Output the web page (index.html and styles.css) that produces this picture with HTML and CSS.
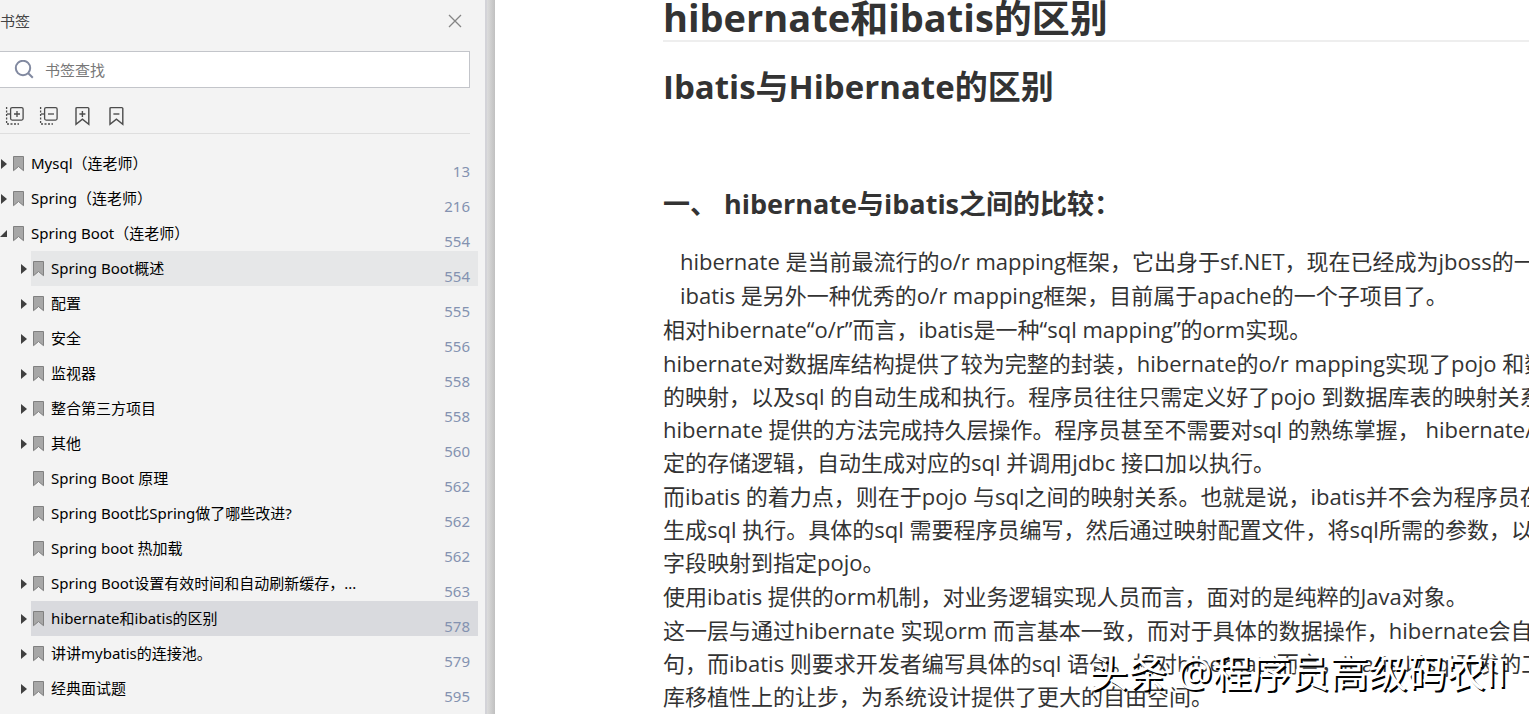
FILE: index.html
```html
<!DOCTYPE html>
<html lang="zh-CN">
<head>
<meta charset="utf-8">
<title>hibernate和ibatis的区别</title>
<link rel="stylesheet" href="styles.css">
</head>
<body>
<svg class="defs" aria-hidden="true">
  <symbol id="mark" viewBox="0 0 11 16"><path d="M.5.5h10v14.200L5.500 10.500.5 14.700z" fill="#a7a7a7" stroke="#808080"/></symbol>
  <symbol id="closed" viewBox="0 0 6 10"><path d="M0 0 6 5 0 10z" fill="#404040"/></symbol>
  <symbol id="open" viewBox="0 0 8 8"><path d="M7 0V7H0z" fill="#404040"/></symbol>
</svg>
<div class="app">
  <aside class="sidebar">
    <header class="head">
      <h2 class="title">书签</h2>
      <button class="icon-button" type="button" aria-label="关闭"><svg width="14" height="14" viewBox="0 0 14 14" fill="none" stroke="#858585" stroke-width="1.300"><path d="M1 1 13 13M13 1 1 13"/></svg></button>
    </header>
    <label class="search">
      <svg width="20" height="20" viewBox="0 0 20 20" fill="none" stroke="#8189a0" stroke-width="2"><circle cx="9" cy="8" r="7.200"/><path d="m14 13 4.800 4.800"/></svg>
      <input class="search-input" type="text" placeholder="书签查找" aria-label="书签查找">
    </label>
    <div class="tools">
      <button class="icon-button" type="button" aria-label="全部展开"><svg width="20" height="20" viewBox="0 0 20 20" fill="none" stroke="#4c4c4c" stroke-width="1.300"><rect x="5.600" y="1.600" width="12.500" height="12.500" rx="1.500"/><path d="M12 5v6M9 8h6"/><path d="M1.600 1v17M2 18h12" stroke-dasharray="2 1.500"/><path d="M2 8h3"/></svg></button>
      <button class="icon-button" type="button" aria-label="全部折叠"><svg width="20" height="20" viewBox="0 0 20 20" fill="none" stroke="#4c4c4c" stroke-width="1.300"><rect x="5.600" y="1.600" width="12.500" height="12.500" rx="1.500"/><path d="M9 8h6"/><path d="M1.600 1v17M2 18h12" stroke-dasharray="2 1.500"/><path d="M2 8h3"/></svg></button>
      <button class="icon-button" type="button" aria-label="添加书签"><svg width="20" height="20" viewBox="0 0 20 20" fill="none" stroke="#4c4c4c" stroke-width="1.400"><path d="M3 2.600q0-1 1-1h10.800q1 0 1 1v15.600L9.400 13.200 3 18.200z"/><path d="M9.400 5v6M6.400 8h6"/></svg></button>
      <button class="icon-button" type="button" aria-label="删除书签"><svg width="20" height="20" viewBox="0 0 20 20" fill="none" stroke="#4c4c4c" stroke-width="1.400"><path d="M3 2.600q0-1 1-1h10.800q1 0 1 1v15.600L9.400 13.200 3 18.200z"/><path d="M6.400 8h6"/></svg></button>
    </div>
    <ul class="tree">
      <li class="row"><svg class="arrow"><use href="#closed"/></svg><a class="item" href="#"><svg class="mark"><use href="#mark"/></svg><span class="name">Mysql（连老师）</span><span class="page">13</span></a></li>
      <li class="row"><svg class="arrow"><use href="#closed"/></svg><a class="item" href="#"><svg class="mark"><use href="#mark"/></svg><span class="name">Spring（连老师）</span><span class="page">216</span></a></li>
      <li class="row"><svg class="arrow"><use href="#open"/></svg><a class="item" href="#"><svg class="mark"><use href="#mark"/></svg><span class="name">Spring Boot（连老师）</span><span class="page">554</span></a></li>
      <li class="row child"><svg class="arrow"><use href="#closed"/></svg><a class="item hover" href="#"><svg class="mark"><use href="#mark"/></svg><span class="name">Spring Boot概述</span><span class="page">554</span></a></li>
      <li class="row child"><svg class="arrow"><use href="#closed"/></svg><a class="item" href="#"><svg class="mark"><use href="#mark"/></svg><span class="name">配置</span><span class="page">555</span></a></li>
      <li class="row child"><svg class="arrow"><use href="#closed"/></svg><a class="item" href="#"><svg class="mark"><use href="#mark"/></svg><span class="name">安全</span><span class="page">556</span></a></li>
      <li class="row child"><svg class="arrow"><use href="#closed"/></svg><a class="item" href="#"><svg class="mark"><use href="#mark"/></svg><span class="name">监视器</span><span class="page">558</span></a></li>
      <li class="row child"><svg class="arrow"><use href="#closed"/></svg><a class="item" href="#"><svg class="mark"><use href="#mark"/></svg><span class="name">整合第三方项目</span><span class="page">558</span></a></li>
      <li class="row child"><svg class="arrow"><use href="#closed"/></svg><a class="item" href="#"><svg class="mark"><use href="#mark"/></svg><span class="name">其他</span><span class="page">560</span></a></li>
      <li class="row child"><svg class="arrow"></svg><a class="item" href="#"><svg class="mark"><use href="#mark"/></svg><span class="name">Spring Boot 原理</span><span class="page">562</span></a></li>
      <li class="row child"><svg class="arrow"></svg><a class="item" href="#"><svg class="mark"><use href="#mark"/></svg><span class="name">Spring Boot比Spring做了哪些改进?</span><span class="page">562</span></a></li>
      <li class="row child"><svg class="arrow"></svg><a class="item" href="#"><svg class="mark"><use href="#mark"/></svg><span class="name">Spring boot 热加载</span><span class="page">562</span></a></li>
      <li class="row child"><svg class="arrow"><use href="#closed"/></svg><a class="item" href="#"><svg class="mark"><use href="#mark"/></svg><span class="name">Spring Boot设置有效时间和自动刷新缓存，...</span><span class="page">563</span></a></li>
      <li class="row child"><svg class="arrow"><use href="#closed"/></svg><a class="item current" href="#"><svg class="mark"><use href="#mark"/></svg><span class="name">hibernate和ibatis的区别</span><span class="page">578</span></a></li>
      <li class="row child"><svg class="arrow"><use href="#closed"/></svg><a class="item" href="#"><svg class="mark"><use href="#mark"/></svg><span class="name">讲讲mybatis的连接池。</span><span class="page">579</span></a></li>
      <li class="row child"><svg class="arrow"><use href="#closed"/></svg><a class="item" href="#"><svg class="mark"><use href="#mark"/></svg><span class="name">经典面试题</span><span class="page">595</span></a></li>
    </ul>
  </aside>
  <div class="divider"></div>
  <main class="doc">
    <h1 class="h1">hibernate和ibatis的区别</h1>
    <h2 class="h2">Ibatis与Hibernate的区别</h2>
    <h3 class="h3">一、 hibernate与ibatis之间的比较：</h3>
    <div class="text">
      <p class="para indent">hibernate 是当前最流行的o/r mapping框架，它出身于sf.NET，现在已经成为jboss的一个</p>
      <p class="para indent">ibatis 是另外一种优秀的o/r mapping框架，目前属于apache的一个子项目了。</p>
      <p class="para">相对hibernate“o/r”而言，ibatis是一种“sql mapping”的orm实现。</p>
      <p class="para">hibernate对数据库结构提供了较为完整的封装，hibernate的o/r mapping实现了pojo 和数据<br>的映射，以及sql 的自动生成和执行。程序员往往只需定义好了pojo 到数据库表的映射关系，<br>hibernate 提供的方法完成持久层操作。程序员甚至不需要对sql 的熟练掌握， hibernate/o<br>定的存储逻辑，自动生成对应的sql 并调用jdbc 接口加以执行。</p>
      <p class="para">而ibatis 的着力点，则在于pojo 与sql之间的映射关系。也就是说，ibatis并不会为程序员在<br>生成sql 执行。具体的sql 需要程序员编写，然后通过映射配置文件，将sql所需的参数，以及<br>字段映射到指定pojo。</p>
      <p class="para">使用ibatis 提供的orm机制，对业务逻辑实现人员而言，面对的是纯粹的Java对象。</p>
      <p class="para">这一层与通过hibernate 实现orm 而言基本一致，而对于具体的数据操作，hibernate会自动<br>句，而ibatis 则要求开发者编写具体的sql 语句。相对hibernate而言，ibatis 以sql开发的工<br>库移植性上的让步，为系统设计提供了更大的自由空间。</p>
    </div>
  </main>
  <div class="watermark">头条 @程序员高级码农II</div>
</div>
</body>
</html>
```
FILE: styles.css
```css
* { box-sizing: border-box; }
body {
  margin: 0;
  font-family: "Open Sans", "Noto Sans CJK SC", sans-serif;
  color: #333;
  background: #fff;
}
h1, h2, h3, p, ul { margin: 0; padding: 0; }
.defs { position: absolute; width: 0; height: 0; }
.app {
  position: relative;
  display: flex;
  height: 100vh;
  overflow: hidden;
}
.sidebar {
  flex: 0 0 485px;
  background: #f3f3f3;
  font-family: "Noto Sans", "Noto Sans CJK SC", sans-serif;
  font-size: 15px;
}
.head {
  display: flex;
  align-items: center;
  justify-content: space-between;
  height: 42px;
  padding-right: 23px;
}
.title { padding-bottom: 2px; font-size: 15px; font-weight: 400; color: #444; }
.icon-button {
  display: flex;
  padding: 0;
  border: 0;
  background: none;
}
.search {
  display: flex;
  align-items: center;
  gap: 11px;
  height: 37px;
  margin: 9px 15px 0 0;
  padding-left: 14px;
  border: 1px solid #c3c5ca;
  border-left: 0;
  background: #fff;
}
.search-input {
  flex: 1;
  min-width: 0;
  padding: 0;
  border: 0;
  outline: 0;
  font: inherit;
  background: none;
}
.search-input::placeholder { color: #777; }
.tools {
  display: flex;
  align-items: flex-start;
  gap: 14px;
  height: 46px;
  margin-right: 15px;
  padding: 18px 0 0 5px;
  border-bottom: 1px solid #dedede;
}
.tree { padding-top: 12px; list-style: none; }
.row {
  display: flex;
  align-items: center;
  height: 35px;
  padding-right: 7px;
}
.child { padding-left: 20px; }
.arrow { flex: none; width: 8px; height: 10px; margin-right: 3px; }
.item {
  display: flex;
  flex: 1;
  align-items: center;
  height: 35px;
  padding: 0 8px 0 2px;
  color: #000;
  text-decoration: none;
}
.hover { background: #e6e7e8; }
.current { background: #d9dade; }
.mark { flex: none; width: 11px; height: 16px; margin-right: 7px; }
.name { flex: 1; padding-bottom: 2px; white-space: nowrap; }
.page { padding-top: 14px; color: #8492b0; }
.divider {
  flex: 0 0 10px;
  border-left: 2px solid #d3d3d8;
  background: linear-gradient(90deg, #dcdcdc, #c0c0c0);
}
.doc {
  flex: 1;
  min-width: 0;
  padding-left: 168px;
  overflow: hidden;
  white-space: nowrap;
}
.h1 {
  height: 42px;
  border-bottom: 2px solid #eee;
  font-size: 38px;
  line-height: 34px;
}
.h2 { margin-top: 20px; font-size: 33px; line-height: 50px; }
.h3 { margin-top: 72px; font-size: 27px; line-height: 40px; }
.text {
  display: flex;
  flex-direction: column;
  gap: 1px;
  margin-top: 21px;
  font-size: 22px;
  line-height: 33px;
}
.indent { padding-left: 17px; }
.watermark {
  position: absolute;
  right: 22px;
  bottom: 12px;
  font-size: 39px;
  line-height: 60px;
  color: #fff;
  text-shadow: 2px 2px 0 #000, 0 0 2px #fff;
  white-space: nowrap;
}
```
